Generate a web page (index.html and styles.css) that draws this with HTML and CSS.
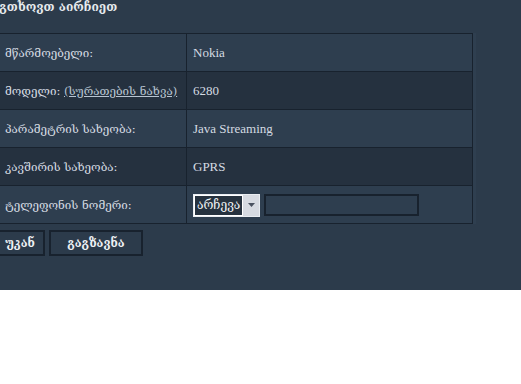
FILE: index.html
```html
<!DOCTYPE html>
<html>
<head>
<meta charset="utf-8">
<link rel="stylesheet" href="styles.css">
</head>
<body>
<div class="panel">
  <div class="inner">
    <div class="title">გთხოვთ აირჩიეთ</div>
    <table class="form">
      <tr class="odd"><td class="lbl">მწარმოებელი:</td><td class="val">Nokia</td></tr>
      <tr class="even"><td class="lbl">მოდელი: <a href="#" class="link">(სურათების ნახვა)</a></td><td class="val">6280</td></tr>
      <tr class="odd"><td class="lbl">პარამეტრის სახეობა:</td><td class="val">Java Streaming</td></tr>
      <tr class="even"><td class="lbl">კავშირის სახეობა:</td><td class="val">GPRS</td></tr>
      <tr class="odd"><td class="lbl">ტელეფონის ნომერი:</td><td class="val">
        <div class="phone">
          <div class="select"><span class="sel-text">არჩევა</span><span class="sel-btn"><svg width="7" height="4" viewBox="0 0 7 4"><path d="M0 0h7L3.5 4z" fill="#4a5260"/></svg></span></div>
          <div class="input"></div>
        </div>
      </td></tr>
    </table>
    <div class="buttons">
      <button class="btn back">უკან</button>
      <button class="btn send">გაგზავნა</button>
    </div>
  </div>
</div>
</body>
</html>
```
FILE: styles.css
```css
html, body { margin: 0; padding: 0; background: #ffffff; }
body { font-family: "DejaVu Serif", serif; }
.panel { background: #2c3b4b; height: 290px; overflow: hidden; }
.inner { margin-left: -5px; padding-top: 1px; }
.title { color: #e6eaee; font-weight: bold; font-size: 12px; height: 32px; line-height: 13px; padding-left: 4px; letter-spacing: 0; }
.form { border-collapse: collapse; width: 478px; border: 1px solid #18222e; box-shadow: 3px 0 0 #2f3f50; }
.form td { border: 1px solid #18222e; height: 37px; padding: 0; vertical-align: middle; color: #d5dbe2; font-size: 11.6px; }
.odd td { background: #2e3e4f; }
.even td { background: #25313f; }
.lbl { width: 191px; padding-left: 9px !important; box-sizing: border-box; }
.val { padding-left: 6px !important; font-family: "Liberation Serif", "DejaVu Serif", serif; font-size: 13px !important; }
.link { color: #b9c5d2; text-decoration: underline; }
.phone { display: flex; align-items: center; gap: 4px; padding-top: 1px; }
.select { display: flex; height: 23px; border: 1px solid #e9edf2; box-sizing: border-box; }
.sel-text { background: #26323f; color: #f0f3f6; border: 1px solid #ffffff; font-family: "DejaVu Serif", serif; font-size: 12px; padding: 0 2px; line-height: 19px; }
.sel-btn { width: 16px; background: #d7dbe2; display: flex; align-items: center; justify-content: center; }
.input { width: 155px; height: 22px; box-sizing: border-box; border: 2px solid #18222e; }
.buttons { display: flex; gap: 4px; margin-top: 6px; }
.btn { background: #2c3b4b; border: 2px solid #18222e; color: #eef1f4; font-family: "DejaVu Serif", serif; font-weight: bold; font-size: 11.5px; height: 26px; padding: 0 8px; }
.back { width: 50px; }
.send { width: 94px; }
```
